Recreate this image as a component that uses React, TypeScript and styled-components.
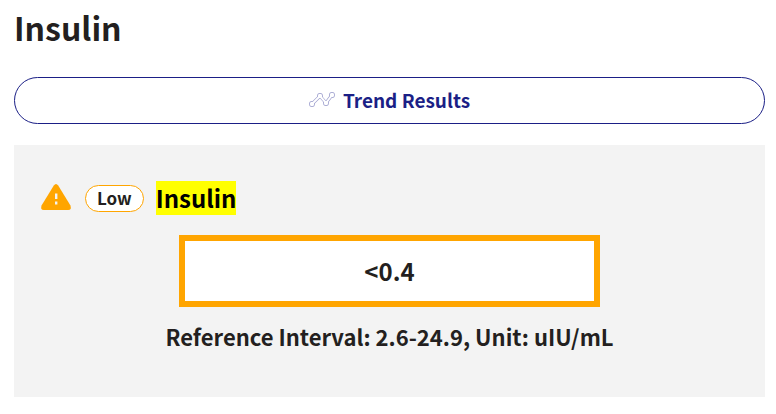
import React from "react";
import styled, { createGlobalStyle } from "styled-components";

const GlobalStyle = createGlobalStyle`
  *, *::before, *::after { box-sizing: border-box; }
  body {
    margin: 0;
    background: #fff;
    color: #231f20;
    font-family: "Source Sans Pro", "Noto Sans CJK SC", sans-serif;
    font-weight: 700;
  }
`;

const Page = styled.main`
  padding: 8px 11px 16px 14px;
`;

const Title = styled.h1`
  margin: 0 0 31px;
  font-size: 32px;
  line-height: 38px;
`;

const TrendButton = styled.button`
  display: flex;
  align-items: center;
  justify-content: center;
  gap: 8px;
  width: 100%;
  height: 47px;
  padding: 0 0 2px;
  border: 1px solid #1b1f86;
  border-radius: 24px;
  background: #fff;
  color: #1b1f86;
  font: inherit;
  font-size: 19px;
  line-height: 24px;
  cursor: pointer;
`;

const ResultCard = styled.section`
  display: flex;
  flex-direction: column;
  margin-top: 21px;
  padding: 36px 25px 45px;
  background: #f3f3f3;
`;

const ResultHeader = styled.div`
  display: flex;
  align-items: center;
  gap: 12px;
  margin-bottom: 20px;
`;

const WarningIcon = styled.svg`
  width: 34px;
  height: 32px;
`;

const Badge = styled.span`
  padding: 0 11px 2px;
  border: 1px solid #ffa500;
  border-radius: 14px;
  background: #fff;
  font-size: 17px;
  line-height: 23px;
`;

const ResultName = styled.h2`
  margin: 0;
  font-size: 24px;
  line-height: 34px;
`;

const Highlight = styled.mark`
  display: block;
  background: #ff0;
  color: #000;
`;

const ResultValue = styled.div`
  align-self: center;
  width: 60%;
  padding: 14px 0;
  border: 6px solid #ffa500;
  background: #fff;
  font-size: 24px;
  line-height: 32px;
  text-align: center;
`;

const Reference = styled.p`
  margin: 14px 0 0;
  font-size: 22px;
  line-height: 31px;
  text-align: center;
`;

const trendNodes = [
  [3, 13],
  [11, 5],
  [17, 12],
  [23, 4],
];
const trendPath = "M3 13 11 5 17 12 23 4";

function TrendIcon() {
  return (
    <svg width="26" height="17" viewBox="0 0 26 17" fill="none" aria-hidden="true">
      <g stroke="#9c9ecd" strokeWidth="3.2">
        <path d={trendPath} />
      </g>
      <g fill="#9c9ecd">
        {trendNodes.map(([x, y]) => (
          <circle key={x} cx={x} cy={y} r="2.9" />
        ))}
      </g>
      <path d={trendPath} stroke="#fff" strokeWidth="2" />
      <g fill="#fff">
        {trendNodes.map(([x, y]) => (
          <circle key={x} cx={x} cy={y} r="2.2" />
        ))}
      </g>
    </svg>
  );
}

export default function App() {
  return (
    <>
      <GlobalStyle />
      <Page>
        <Title>Insulin</Title>
        <TrendButton type="button">
          <TrendIcon />
          Trend Results
        </TrendButton>
        <ResultCard>
          <ResultHeader>
            <WarningIcon viewBox="-1 0 34 32" role="img" aria-label="Warning">
              <path
                d="M13.8 3.5Q16 .4 18.2 3.5L30.3 23.2Q32.2 28 28.2 28H3.8Q-.2 28 1.7 23.2Z"
                fill="#ffa500"
              />
              <path d="M15 11.5h2.4v5.5h-2.4zM15 19.5h2.4v3h-2.4z" fill="#f3f3f3" />
            </WarningIcon>
            <Badge>Low</Badge>
            <ResultName>
              <Highlight>Insulin</Highlight>
            </ResultName>
          </ResultHeader>
          <ResultValue>&lt;0.4</ResultValue>
          <Reference>Reference Interval: 2.6-24.9, Unit: uIU/mL</Reference>
        </ResultCard>
      </Page>
    </>
  );
}
